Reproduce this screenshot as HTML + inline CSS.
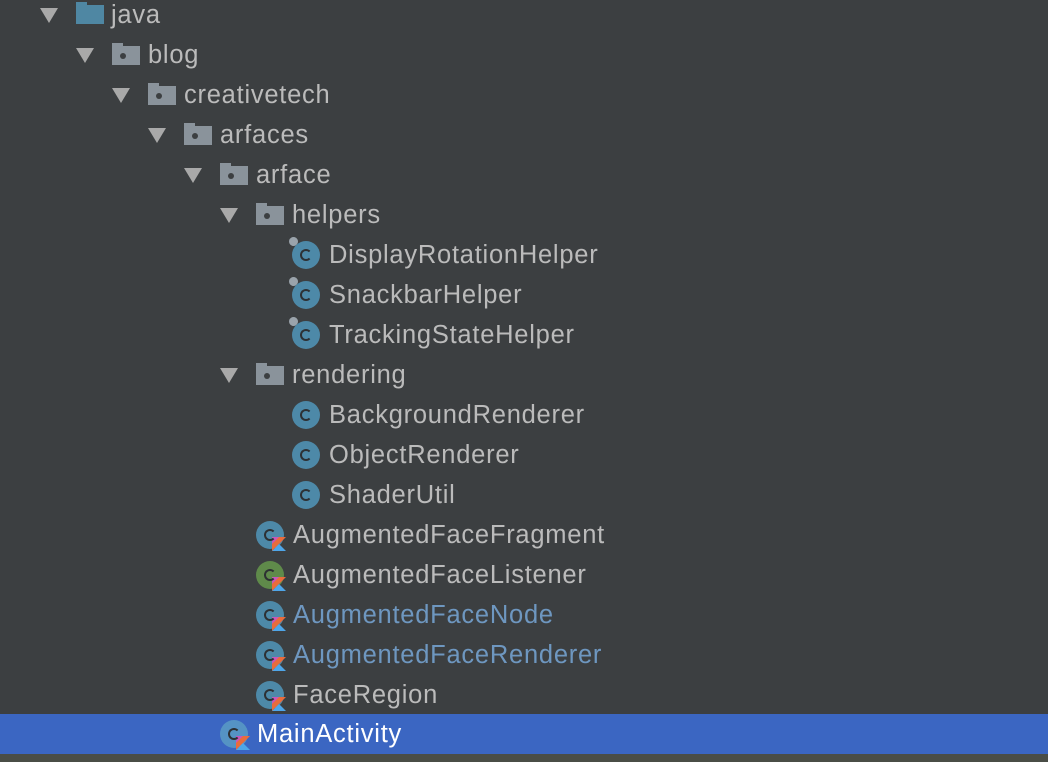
<!DOCTYPE html>
<html><head><meta charset="utf-8"><style>
body{margin:0;width:1048px;height:762px;background:#3c3f41;overflow:hidden;position:relative;font-family:"Liberation Sans","DejaVu Sans",sans-serif;}
.r{position:absolute;left:0;width:1048px;height:40px;}
.t{position:absolute;top:7px;font-size:25.5px;letter-spacing:0.75px;color:#bbbbbb;line-height:26px;white-space:nowrap;}
.a{position:absolute;top:13px;width:0;height:0;border-left:9px solid transparent;border-right:9px solid transparent;border-top:15px solid #a9a9a9;}
.f{position:absolute;top:11px;width:28px;height:19px;background:#8a939b;}
.f:before{content:"";position:absolute;left:0;top:-3px;width:11px;height:4px;background:#8a939b;}
.f:after{content:"";position:absolute;left:8px;top:7px;width:6px;height:6px;border-radius:3px;background:#3c3f41;}
.j{background:#4f87a3;}
.j:before{background:#4f87a3;}
.j:after{display:none;}
.c{position:absolute;top:6px;width:28px;height:28px;border-radius:14px;background:#4d89a8;}
.c:after{content:"";position:absolute;left:8px;top:8px;width:8px;height:8px;border:2.5px solid #2d3033;border-right-color:transparent;border-radius:7px;}
.tag{position:absolute;left:-3px;top:-4px;width:9px;height:9px;border-radius:5px;background:#9aa3ab;transform:rotate(-30deg);}
.k{position:absolute;width:14px;height:14px;left:16px;top:16px;}
</style></head><body>
<div class="r" style="top:-5px"><div class="a" style="left:40px"></div><div class="f j" style="left:76px;top:10px"></div><div class="t" style="left:111px">java</div></div>
<div class="r" style="top:35px"><div class="a" style="left:76px"></div><div class="f" style="left:112px"></div><div class="t" style="left:148px">blog</div></div>
<div class="r" style="top:75px"><div class="a" style="left:112px"></div><div class="f" style="left:148px"></div><div class="t" style="left:184px">creativetech</div></div>
<div class="r" style="top:115px"><div class="a" style="left:148px"></div><div class="f" style="left:184px"></div><div class="t" style="left:220px">arfaces</div></div>
<div class="r" style="top:155px"><div class="a" style="left:184px"></div><div class="f" style="left:220px"></div><div class="t" style="left:256px">arface</div></div>
<div class="r" style="top:195px"><div class="a" style="left:220px"></div><div class="f" style="left:256px"></div><div class="t" style="left:292px">helpers</div></div>
<div class="r" style="top:235px"><div class="c" style="left:292px"><div class="tag"></div></div><div class="t" style="left:329px">DisplayRotationHelper</div></div>
<div class="r" style="top:275px"><div class="c" style="left:292px"><div class="tag"></div></div><div class="t" style="left:329px">SnackbarHelper</div></div>
<div class="r" style="top:315px"><div class="c" style="left:292px"><div class="tag"></div></div><div class="t" style="left:329px">TrackingStateHelper</div></div>
<div class="r" style="top:355px"><div class="a" style="left:220px"></div><div class="f" style="left:256px"></div><div class="t" style="left:292px">rendering</div></div>
<div class="r" style="top:395px"><div class="c" style="left:292px"></div><div class="t" style="left:329px">BackgroundRenderer</div></div>
<div class="r" style="top:435px"><div class="c" style="left:292px"></div><div class="t" style="left:329px">ObjectRenderer</div></div>
<div class="r" style="top:475px"><div class="c" style="left:292px"></div><div class="t" style="left:329px">ShaderUtil</div></div>

<div class="r" style="top:515px"><div class="c" style="left:256px"><svg class="k" viewBox="0 0 14 14"><polygon points="0,0 14,0 0,14" fill="#e96c3c"/><polygon points="0,14 7,7 14,14" fill="#4fa6e8"/><polygon points="0,0 7,0 0,7" fill="#c757bc"/></svg></div><div class="t" style="left:293px">AugmentedFaceFragment</div></div>
<div class="r" style="top:555px"><div class="c" style="left:256px;background:#5f8a4a"><svg class="k" viewBox="0 0 14 14"><polygon points="0,0 14,0 0,14" fill="#e96c3c"/><polygon points="0,14 7,7 14,14" fill="#4fa6e8"/><polygon points="0,0 7,0 0,7" fill="#c757bc"/></svg></div><div class="t" style="left:293px">AugmentedFaceListener</div></div>
<div class="r" style="top:595px"><div class="c" style="left:256px"><svg class="k" viewBox="0 0 14 14"><polygon points="0,0 14,0 0,14" fill="#e96c3c"/><polygon points="0,14 7,7 14,14" fill="#4fa6e8"/><polygon points="0,0 7,0 0,7" fill="#c757bc"/></svg></div><div class="t" style="left:293px;color:#6e97c0">AugmentedFaceNode</div></div>
<div class="r" style="top:635px"><div class="c" style="left:256px"><svg class="k" viewBox="0 0 14 14"><polygon points="0,0 14,0 0,14" fill="#e96c3c"/><polygon points="0,14 7,7 14,14" fill="#4fa6e8"/><polygon points="0,0 7,0 0,7" fill="#c757bc"/></svg></div><div class="t" style="left:293px;color:#6e97c0">AugmentedFaceRenderer</div></div>
<div class="r" style="top:675px"><div class="c" style="left:256px"><svg class="k" viewBox="0 0 14 14"><polygon points="0,0 14,0 0,14" fill="#e96c3c"/><polygon points="0,14 7,7 14,14" fill="#4fa6e8"/><polygon points="0,0 7,0 0,7" fill="#c757bc"/></svg></div><div class="t" style="left:293px">FaceRegion</div></div>
<div class="r" style="top:714px;background:#3b66c2"><div class="c" style="left:220px;background:#5593c4"><svg class="k" viewBox="0 0 14 14"><polygon points="0,0 14,0 0,14" fill="#e96c3c"/><polygon points="0,14 7,7 14,14" fill="#4fa6e8"/><polygon points="0,0 7,0 0,7" fill="#c757bc"/></svg></div><div class="t" style="left:257px;color:#ffffff">MainActivity</div></div>
<div style="position:absolute;left:0;top:754px;width:1048px;height:8px;background:#4a4d46"></div>
</body></html>
